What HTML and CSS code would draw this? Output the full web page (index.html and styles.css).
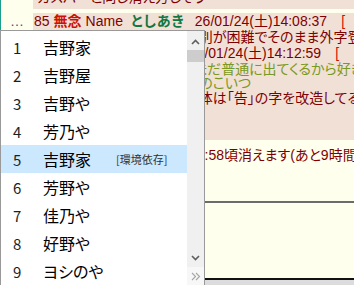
FILE: index.html
```html
<!doctype html>
<html>
  <head>
    <title>スレッド</title>
    <meta charset="utf-8" />
    <link rel="stylesheet" href="styles.css">
  </head>
  <body>
    <div class="thread">
      <div class="reply">
        <div class="rts"></div>
        <div class="rtd top"><div class="bq">ガスパーと同じ消え方しそう</div></div>
      </div>
      <div class="reply joined">
        <div class="rts">…</div>
        <div class="rtd">
          <div class="hd"><span class="no">85</span><span class="sub">無念</span><span class="nm">Name</span><span class="nn">としあき</span><span class="dt">26/01/24(土)14:08:37</span><span class="lk">[</span></div>
          <div class="bq">吉野家看板1文字目字体区別が困難でそのまま外字登録しちゃう</div>
        </div>
      </div>
      <div class="reply">
        <div class="rts">…</div>
        <div class="rtd last">
          <div class="hd late"><span class="no">86</span><span class="sub">無念</span><span class="nm">Name</span><span class="nn">としあき</span><span class="dt">26/01/24(土)14:12:59</span><span class="lk">[</span></div>
          <div class="bq">
            <div class="q">&gt;吉野家CM看板今日現在未だ普通に出てくるから好き</div>
            <div class="q">&gt;看板文字書体旧式吉野家のこいつ</div>
            <div>店名1文字目吉野家吉字自体は「告」の字を改造してるわ</div>
          </div>
        </div>
      </div>
    </div>
    <div class="foot">当板保存期限設定上本日23:58頃消えます(あと9時間42分)</div>
    <div class="form"></div>
    <div class="status"></div>

    <div class="ime">
      <div class="cands">
        <div class="cand"><span class="num">1</span><span class="word">吉野家</span></div>
        <div class="cand"><span class="num">2</span><span class="word">吉野屋</span></div>
        <div class="cand"><span class="num">3</span><span class="word">吉野や</span></div>
        <div class="cand"><span class="num">4</span><span class="word">芳乃や</span></div>
        <div class="cand sel"><span class="num">5</span><span class="word">吉野家</span><span class="note">[環境依存]</span></div>
        <div class="cand"><span class="num">6</span><span class="word">芳野や</span></div>
        <div class="cand"><span class="num">7</span><span class="word">佳乃や</span></div>
        <div class="cand"><span class="num">8</span><span class="word">好野や</span></div>
        <div class="cand"><span class="num">9</span><span class="word">ヨシのや</span></div>
      </div>
      <div class="sbar">
        <div class="sbtn up"><svg width="9" height="6" viewBox="0 0 9 6"><polyline points="1,5 4.5,1.5 8,5" fill="none" stroke="#5f5f5f" stroke-width="1.6"/></svg></div>
        <div class="thumb"></div>
        <div class="track"></div>
        <div class="sbtn down"><svg width="9" height="6" viewBox="0 0 9 6"><polyline points="1,1 4.5,4.5 8,1" fill="none" stroke="#5f5f5f" stroke-width="1.6"/></svg></div>
        <div class="more"><svg width="10" height="9" viewBox="0 0 10 9"><polyline points="1,1 4.5,4.5 1,8" fill="none" stroke="#a5a5a5" stroke-width="1.1"/><polyline points="5,1 8.5,4.5 5,8" fill="none" stroke="#a5a5a5" stroke-width="1.1"/></svg></div>
      </div>
    </div>
  </body>
</html>
```

FILE: styles.css
```css
body {
  margin: 0;
  width: 354px;
  height: 285px;
  overflow: hidden;
  position: relative;
  background-color: #ffffee;
  color: #800000;
  font-family: "Liberation Sans", "Noto Sans CJK JP", sans-serif;
  font-size: 14px;
  font-feature-settings: "palt";
}

.thread {
  margin-top: -11px;
  border-left: 1px solid #1b9e8c;
}

.reply {
  display: flex;
  margin-bottom: 4px;
}

.reply.joined {
  margin-bottom: 0;
}

.rts {
  width: 32px;
  flex-shrink: 0;
  line-height: 16px;
  text-align: center;
  color: #6b3a78;
}

.rtd {
  flex: 1;
  min-width: 0;
  overflow: hidden;
  white-space: nowrap;
  background-color: #f0e0d6;
  padding-left: 1px;
}

.rtd.top {
  padding-bottom: 3px;
}

.rtd.top .bq {
  line-height: 17px;
  margin-top: 0;
}

.rtd.last {
  padding-bottom: 35px;
}

.hd {
  line-height: 16px;
}

.sub {
  margin-left: 4px;
  color: #cc1105;
  font-weight: bold;
}

.nm {
  margin-left: 4px;
}

.nn {
  margin-left: 8px;
  color: #117743;
  font-weight: bold;
  letter-spacing: 1px;
}

.dt {
  margin-left: 10px;
}

.late .dt {
  margin-left: 4px;
}

.lk {
  margin-left: 14px;
  color: #cc1105;
  text-decoration: underline;
}

.bq {
  margin: 1px 0 0 3px;
  line-height: 14.5px;
}

.q {
  color: #789922;
}

.foot {
  margin-top: 7.5px;
  padding-left: 35px;
  line-height: 15px;
  white-space: nowrap;
}

.form {
  margin-top: 38.5px;
  height: 75px;
  border-top: 2px solid #6b6b6b;
  border-bottom: 2px solid #111111;
}

.status {
  height: 10px;
  background-color: #dcdcdc;
}

/* IME candidate window */
.ime {
  position: absolute;
  left: 0;
  top: 30px;
  width: 203px;
  height: 256px;
  display: flex;
  background-color: #ffffff;
  border: 1px solid #999999;
  border-bottom: none;
  font-family: "Noto Sans CJK JP", sans-serif;
}

.cands {
  width: 186px;
  padding-top: 2px;
}

.cand {
  display: flex;
  align-items: center;
  height: 28px;
  color: #000000;
}

.cand.sel {
  background-color: #cce8ff;
}

.num {
  width: 30px;
  padding-left: 12px;
  font-size: 15px;
  color: #1e1e1e;
}

.word {
  font-size: 16px;
}

.note {
  margin-left: 25px;
  font-size: 11px;
  color: #333333;
}

.sbar {
  width: 17px;
  display: flex;
  flex-direction: column;
  background-color: #f0f0f0;
}

.sbtn {
  display: flex;
  justify-content: center;
  align-items: center;
}

.sbtn.up {
  height: 19px;
  padding-top: 3px;
  box-sizing: border-box;
}

.sbtn.down {
  height: 18px;
}

.thumb {
  height: 12px;
  background-color: #cdcdcd;
}

.track {
  flex: 1;
}

.more {
  height: 18px;
  display: flex;
  justify-content: center;
  align-items: center;
  padding-bottom: 2px;
  background-color: #f7f7f7;
}
```
